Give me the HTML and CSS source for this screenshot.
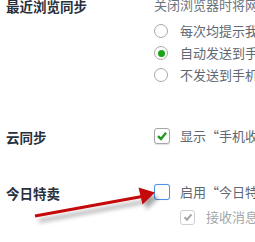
FILE: index.html
```html
<!DOCTYPE html>
<html lang="zh-CN">
<head>
<meta charset="utf-8">
<link rel="stylesheet" href="styles.css">
</head>
<body>
<div class="page">
  <section class="row first">
    <div class="label">最近浏览同步</div>
    <div class="content">
      <div class="desc">关闭浏览器时将网页浏览记录</div>
      <div class="opt"><span class="radio"></span><span class="txt">每次均提示我</span></div>
      <div class="opt"><span class="radio on"></span><span class="txt">自动发送到手机</span></div>
      <div class="opt"><span class="radio"></span><span class="txt">不发送到手机</span></div>
    </div>
  </section>
  <section class="row second">
    <div class="label">云同步</div>
    <div class="content">
      <div class="opt"><span class="check checked"><svg viewBox="0 0 16 16" width="16" height="16"><path d="M4 8.2 L7 11 L12 4.8" fill="none" stroke="#1f9a1f" stroke-width="2.4"/></svg></span><span class="txt">显示“手机收藏夹”</span></div>
    </div>
  </section>
  <section class="row third">
    <div class="label">今日特卖</div>
    <div class="content">
      <div class="opt"><span class="check focus"></span><span class="txt">启用“今日特卖”</span></div>
      <div class="opt sub"><span class="check small disabled"><svg viewBox="0 0 14 14" width="14" height="14"><path d="M3.5 7.2 L6 9.6 L10.5 4.4" fill="none" stroke="#a8a8a8" stroke-width="2.2"/></svg></span><span class="txt dim">接收消息提醒</span></div>
    </div>
  </section>
  <svg class="arrow" width="255" height="242" viewBox="0 0 255 242">
    <line x1="35" y1="216" x2="142" y2="196.5" stroke="#c40a0a" stroke-width="3.2" stroke-linecap="butt"/>
    <polygon points="155,192.5 138.5,187.5 142.5,204.5" fill="#c40a0a"/>
  </svg>
</div>
</body>
</html>
```
FILE: styles.css
```css
html, body {
  margin: 0;
  padding: 0;
  background: #ffffff;
  overflow: hidden;
}
body {
  width: 255px;
  height: 242px;
  font-family: "Noto Sans CJK SC", "Microsoft YaHei", sans-serif;
}
.page {
  position: relative;
  width: 255px;
  height: 242px;
  padding-left: 6px;
  box-sizing: border-box;
  overflow: hidden;
}
.row {
  display: flex;
  align-items: flex-start;
}
.row.first { margin-top: -6px; }
.row.second { margin-top: 39px; }
.row.third { margin-top: 34px; }
.label {
  width: 148px;
  flex: none;
  font-size: 13.5px;
  font-weight: bold;
  color: #27303c;
  line-height: 22px;
  white-space: nowrap;
  position: relative;
  top: 1px;
}
.content {
  flex: none;
  white-space: nowrap;
}
.desc {
  font-size: 13px;
  line-height: 22px;
  color: #6b7480;
  margin-bottom: 4px;
}
.opt {
  display: flex;
  align-items: center;
  height: 22px;
  font-size: 13px;
  color: #5f6873;
}
.opt.sub {
  margin-top: 3px;
  padding-left: 26px;
}
.txt { line-height: 22px; }
.txt.dim { color: #a2a7ad; }
.radio {
  width: 14px;
  height: 14px;
  box-sizing: border-box;
  border: 1px solid #a9a9a9;
  border-radius: 50%;
  margin-right: 12px;
  display: flex;
  align-items: center;
  justify-content: center;
  background: #fff;
  flex: none;
}
.radio.on::after {
  content: "";
  width: 7px;
  height: 7px;
  border-radius: 50%;
  background: #1aa514;
}
.check {
  width: 16px;
  height: 16px;
  box-sizing: border-box;
  border: 1px solid #a6a6a6;
  border-radius: 3px;
  margin-right: 10px;
  background: #fff;
  box-shadow: 0 1px 1px rgba(0,0,0,0.12);
  display: flex;
  align-items: center;
  justify-content: center;
  flex: none;
  overflow: hidden;
}
.check svg { flex: none; }
.check.focus {
  border-color: #4f8fe8;
  box-shadow: 0 0 1px rgba(79,143,232,0.5);
}
.check.small {
  width: 15px;
  height: 15px;
  margin-right: 11px;
}
.check.disabled {
  border-color: #cfcfcf;
  box-shadow: none;
}
.arrow {
  position: absolute;
  left: 0;
  top: 0;
  filter: drop-shadow(4px 5px 2px rgba(0,0,0,0.35));
  pointer-events: none;
}
```
